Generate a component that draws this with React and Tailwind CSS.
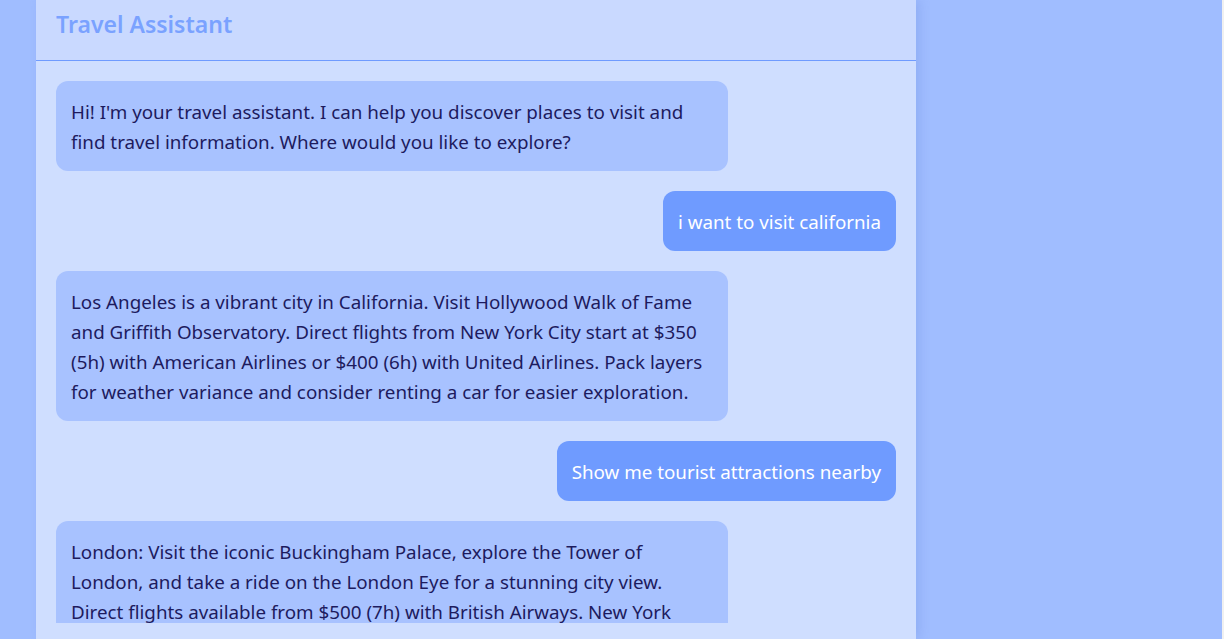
const messages = [
  {
    from: 'bot',
    text: "Hi! I'm your travel assistant. I can help you discover places to visit and find travel information. Where would you like to explore?",
  },
  { from: 'user', text: 'i want to visit california' },
  {
    from: 'bot',
    text: 'Los Angeles is a vibrant city in California. Visit Hollywood Walk of Fame and Griffith Observatory. Direct flights from New York City start at $350 (5h) with American Airlines or $400 (6h) with United Airlines. Pack layers for weather variance and consider renting a car for easier exploration.',
  },
  { from: 'user', text: 'Show me tourist attractions nearby' },
  {
    from: 'bot',
    text: 'London: Visit the iconic Buckingham Palace, explore the Tower of London, and take a ride on the London Eye for a stunning city view. Direct flights available from $500 (7h) with British Airways. New York City: Walk through Central Park, see the Statue of Liberty and enjoy a Broadway show in Times Square.',
  },
];

export default function App() {
  return (
    <div className="h-screen overflow-hidden bg-[#f0f0f0]" style={{ fontFamily: '"Noto Sans", "Open Sans", sans-serif' }}>
      <div className="mr-[2px] h-full bg-[#a0bdff]">
        <div className="ml-[36px] flex h-full w-[880px] flex-col bg-[#cfdeff] shadow-[4px_0_10px_rgba(80,110,200,0.18)]">
          {/* Header */}
          <div className="h-[61px] shrink-0 border-b border-[#6f9bff] bg-[#c9d9ff] px-5 pt-[8px]">
            <h1 className="text-[23px] font-semibold leading-[32px] text-[#7aa2ff]">Travel Assistant</h1>
          </div>

          {/* Messages */}
          <div className="flex h-[562px] shrink-0 flex-col gap-5 overflow-hidden p-5">
            {messages.map((m, i) =>
              m.from === 'bot' ? (
                <div
                  key={i}
                  className="max-w-[80%] shrink-0 self-start rounded-xl bg-[#a8c2ff] px-[15px] pt-[16px] pb-[14px] text-[18.8px] leading-[30px] text-[#1d1b5e]"
                >
                  {m.text}
                </div>
              ) : (
                <div
                  key={i}
                  className="max-w-[80%] shrink-0 self-end rounded-xl bg-[#6f9bff] px-[15px] pt-[16px] pb-[14px] text-[18.8px] leading-[30px] text-white"
                >
                  {m.text}
                </div>
              )
            )}
          </div>
        </div>
      </div>
    </div>
  );
}
